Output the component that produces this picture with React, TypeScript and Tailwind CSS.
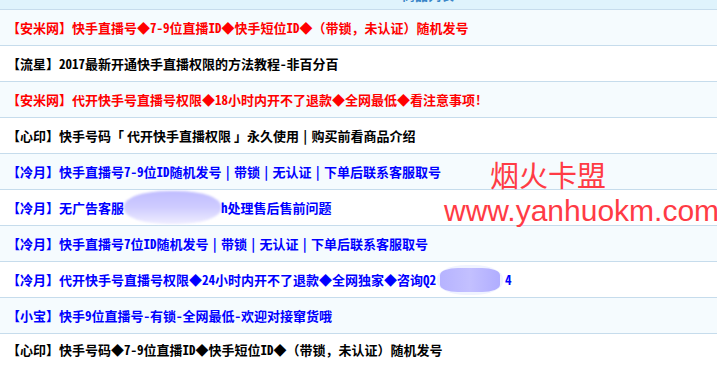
import React from "react";

const FONT = '"Noto Sans Mono CJK SC","Noto Sans CJK SC","Noto Sans",sans-serif';

type Row = { color: string; content: React.ReactNode };

const Sep = () => <span className="mx-[3px]">|</span>;

const Blur1 = () => (
  <span className="inline-block align-middle w-[97px] h-[33px] rounded-[45%] bg-gradient-to-b from-[#c0bdff] via-[#cfccff] to-[#efedff] blur-[1px]" />
);
const Blur2 = () => (
  <span className="inline-block align-middle w-[66px] h-[30px] ml-[1px] mr-[2px] rounded-[45%] bg-[#f0f3ff] p-[3px] blur-[0.6px]">
    <span className="block w-full h-full rounded-[30%] bg-gradient-to-r from-[#b6b3ff] via-[#c3c0ff] to-[#b0adff]" />
  </span>
);

const rows: Row[] = [
  { color: "text-[#ff0000]", content: "【安米网】快手直播号◆7-9位直播ID◆快手短位ID◆（带锁，未认证）随机发号" },
  { color: "text-black", content: "【流星】2017最新开通快手直播权限的方法教程-非百分百" },
  { color: "text-[#ff0000]", content: "【安米网】代开快手号直播号权限◆18小时内开不了退款◆全网最低◆看注意事项!" },
  {
    color: "text-black",
    content: (
      <>
        <span>【心印】快手号码「</span>
        <span className="ml-[3px]">代开快手直播权限</span>
        <span className="ml-[3px]">」永久使用</span>
        <Sep />
        <span>购买前看商品介绍</span>
      </>
    ),
  },
  {
    color: "text-[#0000ff]",
    content: (
      <>
        <span>【冷月】快手直播号7-9位ID随机发号</span>
        <Sep />
        <span>带锁</span>
        <Sep />
        <span>无认证</span>
        <Sep />
        <span>下单后联系客服取号</span>
      </>
    ),
  },
  {
    color: "text-[#0000ff]",
    content: (
      <>
        <span>【冷月】无广告客服</span>
        <Blur1 />
        <span>h处理售后售前问题</span>
      </>
    ),
  },
  {
    color: "text-[#0000ff]",
    content: (
      <>
        <span>【冷月】快手直播号7位ID随机发号</span>
        <Sep />
        <span>带锁</span>
        <Sep />
        <span>无认证</span>
        <Sep />
        <span>下单后联系客服取号</span>
      </>
    ),
  },
  {
    color: "text-[#0000ff]",
    content: (
      <>
        <span>【冷月】代开快手号直播号权限◆24小时内开不了退款◆全网独家◆咨询Q2</span>
        <Blur2 />
        <span>4</span>
      </>
    ),
  },
  { color: "text-[#0000ff]", content: "【小宝】快手9位直播号-有锁-全网最低-欢迎对接窜货哦" },
  { color: "text-black", content: "【心印】快手号码◆7-9位直播ID◆快手短位ID◆（带锁，未认证）随机发号" },
];

export default function App() {
  return (
    <div className="relative w-[717px] h-[376px] overflow-hidden bg-white" style={{ fontFamily: FONT }}>
      <div className="h-[10px] border-b border-[#c6dcec] bg-[#dff3fc] overflow-hidden">
        <div className="-mt-[12px] pl-[402px] text-[13px] leading-[14px] font-bold text-[#3a86c8]">商品列表</div>
      </div>
      {rows.map((r, i) => {
        const last = i === rows.length - 1;
        const bg = i % 2 === 0 ? "bg-[#f5fbfe]" : "bg-white";
        return (
          <div
            key={i}
            className={
              last
                ? `h-[42px] flex items-start pt-[6px] pl-[7px] ${bg} ${r.color} text-[13px] font-bold whitespace-nowrap`
                : `h-[36px] flex items-center pl-[7px] border-b border-[#c6dcec] ${bg} ${r.color} text-[13px] font-bold whitespace-nowrap`
            }
          >
            {r.content}
          </div>
        );
      })}
      <div className="absolute left-[490px] top-[160px] text-[29px] leading-[29px] text-[#ff3b45] font-light">
        烟火卡盟
      </div>
      <div
        className="absolute left-[444px] top-[196px] text-[30px] leading-[30px] text-[#ff3b45]"
        style={{ fontFamily: '"Liberation Sans",Arial,sans-serif' }}
      >
        www.yanhuokm.com
      </div>
    </div>
  );
}
